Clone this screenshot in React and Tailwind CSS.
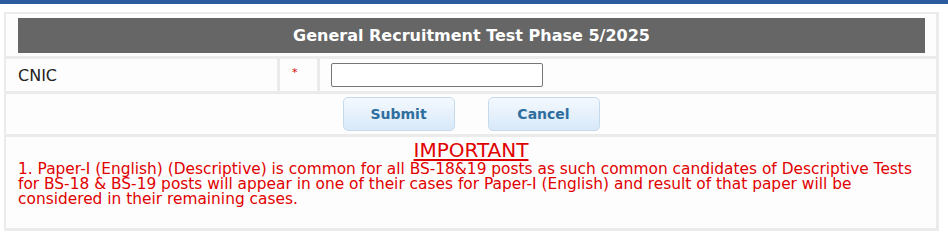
const font = { fontFamily: '"DejaVu Sans", Verdana, sans-serif' };

function Cell({ className = '', children }) {
  return <div className={`bg-[#fdfdfd] ${className}`}>{children}</div>;
}

function Btn({ children }) {
  return (
    <button
      type="button"
      className="w-[112px] h-[34px] rounded-[5px] border border-[#c5dbec] bg-gradient-to-b from-[#f4f9fe] to-[#d8e9f9] text-[14px] font-bold text-[#2e6e9e]"
    >
      {children}
    </button>
  );
}

export default function App() {
  return (
    <div className="w-[948px] h-[237px] bg-white" style={font}>
      <div className="h-[4px] bg-[#2c5b9e]" />
      <div className="ml-[4px] mt-[8px] w-[935px] bg-[#ebebeb] pt-[2px] pl-[2px] pr-[3px] pb-[3px] flex flex-col gap-[3px]">
        <Cell className="h-[42px] pt-[4px] pl-[12px] pr-[11px]">
          <div className="h-[35px] bg-[#666666] flex items-center justify-center text-white font-bold text-[16px]">
            General Recruitment Test Phase 5/2025
          </div>
        </Cell>

        <div className="flex gap-[3px] h-[32px]">
          <Cell className="w-[271px] pl-[12px] pt-[1px] flex items-center text-[16px] text-[#222]">
            CNIC
          </Cell>
          <Cell className="w-[37px] pl-[12px] pt-[8px] text-[11px] leading-[12px] text-[#e00000]">
            *
          </Cell>
          <Cell className="flex-1 pl-[11px] flex items-center">
            <input
              type="text"
              className="w-[212px] h-[24px] border border-[#767676] rounded-[2px] bg-white px-1 text-[13px] outline-none"
            />
          </Cell>
        </div>

        <Cell className="h-[40px] flex items-center justify-center gap-[33px]">
          <Btn>Submit</Btn>
          <Btn>Cancel</Btn>
        </Cell>

        <Cell className="h-[91px] pt-[2px] pl-[12px] pr-[6px] text-[#e00000]">
          <div className="text-center text-[20px] leading-[23px] underline underline-offset-[2px] pr-[6px]">
            IMPORTANT
          </div>
          <p className="text-[15.4px] leading-[15px]">
            1. Paper-I (English) (Descriptive) is common for all BS-18&amp;19 posts as such common candidates of Descriptive Tests for BS-18 &amp; BS-19 posts will appear in one of their cases for Paper-I (English) and result of that paper will be considered in their remaining cases.
          </p>
        </Cell>
      </div>
    </div>
  );
}
